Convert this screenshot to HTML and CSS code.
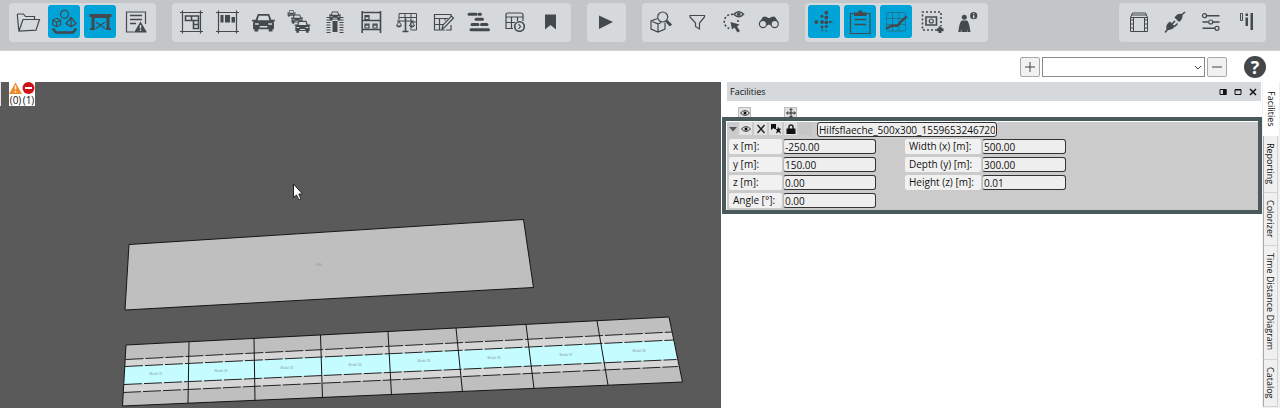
FILE: index.html
```html
<!DOCTYPE html>
<html lang="en">
<head>
<meta charset="utf-8">
<title>Facilities</title>
<link rel="stylesheet" href="styles.css">
</head>
<body>
<svg class="defs" aria-hidden="true">
  <symbol id="car" viewBox="0 0 24 20">
    <path d="M6 1h12l2.200 6H24v2h-1.500l.5 2v6h-1.500v2.500h-4V17h-11v2.500h-4V17H1v-6l.5-2H0V7h3.800z" fill="currentColor"/>
    <path d="M7.200 3h9.600l1.400 4.500H5.800z" fill="#d5d9dc"/>
    <path d="M3 11.500h4M17 11.500h4M8 14.500h8" stroke="#d5d9dc" stroke-width="1.600"/>
  </symbol>
  <symbol id="eye" viewBox="0 0 10 8">
    <path d="M.5 4Q5-.8 9.500 4 5 8.800.5 4z" fill="none" stroke="currentColor" stroke-width=".8"/>
    <circle cx="5" cy="4" r="1.500" fill="currentColor" stroke="none"/>
  </symbol>
</svg>
<header class="toolbar">
  <div class="group">
    <button class="tool" aria-label="Open"><svg viewBox="0 0 24 24"><path d="M2.800 20.500 1.300 4.800 2 4h5.500l2 2.500h9V9M3 21 7 9.500h16.500L20 20.200z"/></svg></button>
    <button class="tool on" aria-label="Objects"><svg viewBox="0 0 24 24"><circle cx="12.500" cy="4.300" r="4"/><path d="m4.700 8.300 4 2v4.400l-4 2-4-2v-4.400zM.7 10.300l4 2 4-2M4.700 12.300v4.400M19 7.500l5 6-5 3.200-5-3.200zM19 7.500v9"/><path class="heavy" d="M.8 18.500 4 22.500h17l3.200-4"/></svg></button>
    <button class="tool on" aria-label="Areas"><svg viewBox="0 0 24 24"><path class="fill" d="M1.500 4h22v3h-2v11H23v2h-5v-2h.5V8h-12v10H7v2H2v-2h1.500V7h-2z"/><path d="m8 12 9 6.500m0-6.500-9 6.500"/></svg></button>
    <button class="tool" aria-label="Log"><svg viewBox="0 0 24 24"><path d="M10 22H2.500V2h19v12"/><path class="mid" d="M6 5.500h12M6 9.500h12M6 13.500h6"/><path class="fill" d="m16.500 11.500 6.500 11H10z"/><path class="cut" d="M16.500 15v3.500m0 1v1.500"/></svg></button>
  </div>
  <div class="group">
    <button class="tool" aria-label="Layout"><svg viewBox="0 0 24 24"><path d="M3.500.5v23M21.500.5v23M1 2.500h23M1 21.500h23"/><path class="mid" d="M6.500 6h13v12.500h-5v-8h-8zM12.500 6v4.500h7M14.500 14.500h5"/></svg></button>
    <button class="tool" aria-label="Rows"><svg viewBox="0 0 24 24"><path d="M3.500.5v23M21.500.5v23M1 2.500h23M1 21.500h23"/><path class="fill" d="M5.500 5h3v7.500h-3zM10 5h5v7.500h-5zM16.500 7h3.500v5.500h-3.500z"/></svg></button>
    <button class="tool" aria-label="Vehicle"><svg viewBox="0 0 24 24"><use href="#car" x="1" y="3" width="23" height="19"/></svg></button>
    <button class="tool" aria-label="Vehicle queue"><svg viewBox="0 0 24 24"><use href="#car" x="0" y="0" width="9" height="7"/><use href="#car" x="4" y="4" width="12" height="10"/><use href="#car" x="7" y="10" width="17" height="13"/></svg></button>
    <button class="tool" aria-label="Route"><svg viewBox="0 0 24 24"><use href="#car" x="5" y="1" width="14" height="10"/><path class="fill" d="M9.500 11h5v11h-5z"/><path class="dash" d="M5.500 7v16M18.500 7v16"/></svg></button>
    <button class="tool" aria-label="Shelf"><svg viewBox="0 0 24 24"><path class="mid" d="M3.200 1v22M21.500 1v22M3 2.500h18M3 10.500h18M3 19.500h18"/><path d="M6 5.500h4v4H6zM6 14h4v4H6zM14 14h4v4h-4z"/><path class="mid" d="M6 6.500h4M6 15h4M14 15h4"/></svg></button>
    <button class="tool" aria-label="Compare"><svg viewBox="0 0 24 24"><path class="thin" d="M4 10V3.500h17.500V20H17M4 7.500h17.500M10 3.500v4M16 3.500v17M16 12h5.500M2 11h17M4 11l-2.500 5M4 11l2.500 5M17 11l-2.500 5M17 11l2.500 5"/><path class="mid" d="M10.500 8v13M7.500 21.500h6"/><path class="fill" d="M1 15.500h6q-3 4-6 0M14 15.500h6q-3 4-6 0"/></svg></button>
    <button class="tool" aria-label="Edit table"><svg viewBox="0 0 24 24"><path d="M14 20H3.500V4.500H20V7M3.500 8.500H17M3.500 14.500H12M8.500 8.500V20M14 8.500v2M20 15v5h-5M11 19l1-4 8.500-9 2 2-8.500 9z"/></svg></button>
    <button class="tool" aria-label="Schedule"><svg viewBox="0 0 24 24"><path class="bold round" d="M2 4.300h7M12 4.300h1.500M9 9.300h6.500M5 14.500h6M14.500 14.500h5.500M4 19.700h17.500"/></svg></button>
    <button class="tool" aria-label="Timetable"><svg viewBox="0 0 24 24"><path d="M10 18.500H3V5q0-2 2-2h13q2 0 2 2v6M3 7h17M3 12.500h9M8.500 7v11.500M14.500 7v4"/><circle class="mid" cx="16.500" cy="16.500" r="4.800"/><path d="m15.500 14 2 2.500-2 2.500"/></svg></button>
    <button class="tool" aria-label="Bookmark"><svg viewBox="0 0 24 24"><path class="fill" d="M6 4.500h11v15l-5.500-4.500L6 19.500z"/></svg></button>
  </div>
  <div class="group">
    <button class="tool" aria-label="Play"><svg viewBox="0 0 24 24"><path class="fill" d="m5 5.500 14 6.500-14 7z"/></svg></button>
  </div>
  <div class="group">
    <button class="tool" aria-label="Search object"><svg viewBox="0 0 24 24"><path d="M8.500 8.500 2 11v8l7 3 7-3v-6M2 11l7 3v8M9 14l3-1.500"/><circle cx="13.700" cy="7" r="5"/><path class="bold" d="m17.500 11 4.500 4.500"/></svg></button>
    <button class="tool" aria-label="Filter"><svg viewBox="0 0 24 24"><path d="M5 5.500h14.500v1.500L14.500 13v6l-4-2.500V13L5 7z"/></svg></button>
    <button class="tool" aria-label="Select visible"><svg viewBox="0 0 24 24"><path class="mid dots" d="M12 4.500a7.200 7.200 0 1 0-3 14.200M17 12V9"/><path class="mid" d="M13 4.300q4.700-5 9.500 0-4.800 5-9.500 0z"/><circle class="fill" cx="17.700" cy="4.300" r="1.800"/><path class="fill" d="m9.500 12 9 2.500-2.500 2 3 4.500-2.500 1.500-3-5-2.500 2z"/></svg></button>
    <button class="tool" aria-label="Find"><svg viewBox="0 0 24 24"><circle cx="6" cy="14" r="3.600"/><circle cx="17.700" cy="14" r="3.600"/><path class="fill" d="m2.500 12.500 3-5 1.500-1 3 .5 1 1h2l1-1 3-.5 1.500 1 3 5-3-2-3.500 1-1.500 4-1.700-1-1.700 1-1.500-4-3.500-1z"/></svg></button>
  </div>
  <div class="group">
    <button class="tool on" aria-label="Point cloud"><svg viewBox="0 0 24 24"><g class="fill"><circle cx="4.300" cy="12" r="1.900"/><circle cx="10" cy="6.200" r="1.500"/><circle cx="10" cy="12" r="1.900"/><circle cx="10" cy="17" r="1.500"/><circle cx="14.300" cy="2.700" r="1.900"/><circle cx="14.300" cy="7.500" r="1.900"/><circle cx="14.300" cy="12.300" r="1.900"/><circle cx="14.300" cy="16.500" r="1.500"/><circle cx="18.300" cy="12" r="1.300"/><circle cx="10.300" cy="20.300" r="1"/><circle cx="14.300" cy="20.700" r=".8"/><circle cx="21.300" cy="12" r=".6"/></g></svg></button>
    <button class="tool on" aria-label="Clipboard"><svg viewBox="0 0 24 24"><path d="M2.500 3.500H22v20H2.500z"/><path class="fill" d="M6 2.500h4q.5-2.500 2.200-2.500t2.300 2.500h4v3.500H6z"/><path class="mid" d="M6.500 9.500H18M6.500 14.500H18"/></svg></button>
    <button class="tool on" aria-label="Chart"><svg viewBox="0 0 24 24"><path class="faint" d="M2.500 4q0-1.500 1.500-1.500h16q1.500 0 1.500 1.500v15.500q0 1.500-1.500 1.500H4q-1.500 0-1.500-1.500zM8.500 2.500V21M15 2.500V21M2.500 8.500h19M2.500 14.500h19"/><path class="heavy" d="M2 18.700 7.700 15.700H13.300L17.300 11.300 22.700 6.300"/></svg></button>
    <button class="tool" aria-label="Add snapshot"><svg viewBox="0 0 24 24"><path class="mid dots" d="M17 20H2.500V2H21v14"/><path class="mid" d="M6 7h10.500v8H6z"/><circle cx="11.300" cy="11" r="2"/><path class="bold" d="M20 16.500v6.500M17 19.700h6.500"/></svg></button>
    <button class="tool" aria-label="Person info"><svg viewBox="0 0 24 24"><g class="fill"><circle cx="8.300" cy="7.200" r="2.500"/><path d="M6 10.500h5q2 1 3.500 11.500H12l-.5-3V22H5.500l-.3-3-.5 3H2.300Q3.500 11.500 6 10.500z"/><circle cx="17.700" cy="5.700" r="3.600"/></g><path class="cut" d="M17.700 3.300v1M17.700 5.300v3"/></svg></button>
  </div>
  <div class="group last">
    <button class="tool" aria-label="Module"><svg viewBox="0 0 24 24"><path class="thin" d="M4.500 7.500h17v14h-17zM4.500 7.500l2-4.500h13l2 4.500M5.500 5h15M7.500 7.500v14M18.500 7.500v14"/><path class="dots thin" d="M6 9v12M20 9v12"/></svg></button>
    <button class="tool" aria-label="Connect"><svg viewBox="0 0 24 24"><path class="fill" d="M12.500 7.500q3-5 7.500-3.500 2 4.500-3 8zM4.500 19.500q-1.500-4.500 3.500-8l5 5q-4 5-8.500 3z"/><path class="mid" d="m19.500 5 3.500-3M3 22.500l3-3.500M10 14l3-3M12.500 16.500l3-3"/></svg></button>
    <button class="tool" aria-label="Settings"><svg viewBox="0 0 24 24"><path class="mid" d="M9 5.700h12.500M4.500 12H10M15 12h6.500M4.500 18.300h12.500"/><circle cx="6.500" cy="5.700" r="2"/><circle cx="12.700" cy="12" r="2"/><circle cx="19" cy="18.300" r="2"/></svg></button>
    <button class="tool" aria-label="Levels"><svg viewBox="0 0 24 24"><path class="thin" d="M6.500 3.500h2v7h-2z"/><path class="fill" d="M11.500 3.500H14V6h-2.500zM11.500 7.500H14V16h-2.500zM16.500 3H19v17h-2.500z"/></svg></button>
  </div>
</header>
<div class="subbar">
  <button class="small" aria-label="Add"><svg viewBox="0 0 12 12"><path d="M6 1v10M1 6h10"/></svg></button>
  <div class="combo">
    <select aria-label="Selection"><option></option></select>
    <svg viewBox="0 0 8 6"><path d="m1 1 3 3 3-3"/></svg>
  </div>
  <button class="small" aria-label="Remove"><svg viewBox="0 0 12 12"><path d="M1 6h10"/></svg></button>
  <button class="help" aria-label="Help">?</button>
</div>
<main class="main">
  <section class="view" aria-label="3D view">
    <svg class="scene" viewBox="0 82 721 326" preserveAspectRatio="xMinYMin meet">
      <path fill="#e4e4e4" d="M0 82h1v24H0z"/>
      <path class="edge area" d="m129 244.500 394.500-25L533.500 287.500 125 310z"/>
      <text x="319" y="266">Hilfs</text>
      <path fill="#bfbfbf" d="m126 345 543-28 13.500 65L122.500 406z"/>
      <path fill="#d6d6d6" d="m125.500 359.500 547-27.500 5.500 34.500-555 26z"/>
      <path fill="#c4fcff" d="m125 366.500 549-26.500 2.500 19.500-552.500 25z"/>
      <path class="edge" d="m126 345 543-28 13.500 65L122.500 406z"/>
      <path class="broken" d="m125.500 359.500 547-27.500M125 366.500 674 340M124 384.500l552.500-25M123 392.500l555-26"/>
      <path class="edge" d="M189 342 188 403.500M254 338l1 63M320.500 335l2 63M388 332l3.500 63M456 328l6.500 64M526 324.500l8 64M597 321l11 64"/>
      <text x="156" y="375">Modul 01</text><text x="221" y="372">Modul 02</text><text x="287" y="369">Modul 03</text><text x="355" y="366">Modul 04</text><text x="424" y="362">Modul 05</text><text x="494" y="359">Modul 06</text><text x="566" y="356">Modul 07</text><text x="639" y="352">Modul 08</text>
      <path fill="#fff" stroke="#222" d="M293.500 184v13.500l3-2.500 2.500 5 2-1-2.200-5h3.700z"/>
    </svg>
    <div class="alerts">
      <span><svg viewBox="0 0 13 12"><path d="m6.500.5 6.500 11.500H0z" fill="#ee8a2c"/><path d="M6.500 3.500v4M6.500 9v1.500" stroke="#fff3dc" stroke-width="1.500"/></svg>(0)</span>
      <span><svg viewBox="0 0 13 12"><circle cx="6.500" cy="6" r="6" fill="#cf1218"/><path d="M3 6h7" stroke="#fff" stroke-width="2"/></svg>(1)</span>
    </div>
  </section>
  <section class="panel">
    <div class="titlebar">
      <h1>Facilities</h1>
      <button aria-label="Dock"><svg viewBox="0 0 8 8"><path d="M1 1.500h6v5H1z"/><path class="solid" d="M4 1h3.500v6H4z"/></svg></button>
      <button aria-label="Maximize"><svg viewBox="0 0 8 8"><path d="M1 1.500h6v5H1zM1 2h6"/></svg></button>
      <button aria-label="Close"><svg viewBox="0 0 8 8"><path d="m1 1 6 6M7 1 1 7" stroke-width="1.500"/></svg></button>
    </div>
    <div class="columns">
      <button class="mini" aria-label="Visibility"><svg viewBox="0 0 10 8"><use href="#eye" width="10" height="8"/></svg></button>
      <button class="mini" aria-label="Move"><svg viewBox="0 0 10 10"><path d="M5 1v8M1 5h8M3.500 2 5 .5 6.500 2M3.500 8 5 9.500 6.500 8M2 3.500.5 5 2 6.500M8 3.500 9.500 5 8 6.500"/></svg></button>
    </div>
    <article class="record">
      <div class="head">
        <button class="arrow" aria-label="Collapse"><svg viewBox="0 0 8 6"><path d="M0 1h8L4 5.500z" fill="#555"/></svg></button>
        <button class="mini" aria-label="Visible"><svg viewBox="0 0 10 8"><use href="#eye" width="10" height="8"/></svg></button>
        <button class="mini" aria-label="Delete"><svg viewBox="0 0 10 10"><path d="m1.500 1 7 8M8.500 1l-7 8" stroke-width="1.400"/></svg></button>
        <button class="mini" aria-label="Rename"><svg viewBox="0 0 10 10"><path class="solid" d="M0 0h5v5H3.500L2.500 4 0 6zM7 2.500l1 2 2.200.2-1.500 1.500 1.300 3.300L7.500 8 5 9.500l1-3L4.500 5h2z"/></svg></button>
        <button class="mini" aria-label="Lock"><svg viewBox="0 0 10 10"><path d="M3 5V3q0-2 2-2t2 2v2" stroke-width="1.500"/><path class="solid" d="M.5 4.500h9V10h-9z"/></svg></button>
        <button class="mini blank" aria-label="Color"></button>
        <input class="name" aria-label="Name" value="Hilfsflaeche_500x300_1559653246720">
      </div>
      <div class="fields">
        <div class="field"><label for="x">x [m]:</label><input id="x" value="-250.00"></div>
        <div class="field wide"><label for="w">Width (x) [m]:</label><input id="w" value="500.00"></div>
        <div class="field"><label for="y">y [m]:</label><input id="y" value="150.00"></div>
        <div class="field wide"><label for="d">Depth (y) [m]:</label><input id="d" value="300.00"></div>
        <div class="field"><label for="z">z [m]:</label><input id="z" value="0.00"></div>
        <div class="field wide"><label for="h">Height (z) [m]:</label><input id="h" value="0.01"></div>
        <div class="field"><label for="a">Angle [°]:</label><input id="a" value="0.00"></div>
      </div>
    </article>
  </section>
  <nav class="tabs">
    <button class="active">Facilities</button>
    <button>Reporting</button>
    <button>Colorizer</button>
    <button>Time Distance Diagram</button>
    <button>Catalog</button>
  </nav>
</main>
</body>
</html>
```
FILE: styles.css
```css
* { box-sizing: border-box; }
body {
  margin: 0;
  min-height: 100vh;
  display: flex;
  flex-direction: column;
  background: #fff;
  color: #111;
  font: 10px/12px "Open Sans", "Noto Sans", sans-serif;
}
button, input, select { margin: 0; padding: 0; font: inherit; color: inherit; }
button { border: 0; background: none; }
svg { display: block; }
.defs { position: absolute; width: 0; height: 0; }

.toolbar {
  display: flex;
  gap: 16px;
  padding: 3px 14px 8px 9px;
  background: #c3c6c8;
  border-bottom: 1px solid #cfd1d3;
}
.group {
  display: flex;
  gap: 4px;
  padding: 2px 4px 4px 3px;
  border-radius: 4px;
  background: #d5d9dc;
}
.last { margin-left: auto; }
.tool {
  display: grid;
  place-items: center;
  width: 32px;
  height: 33px;
  border-radius: 3px;
  color: #43494d;
}
.on { background: #00a3d8; }
.tool svg {
  width: 24px;
  height: 24px;
  overflow: visible;
  fill: none;
  stroke: currentColor;
  stroke-width: 1.2;
}
.tool use { stroke: none; }
.tool .fill { fill: currentColor; stroke: none; }
.tool .thin { stroke-width: 1; }
.tool .faint { stroke-width: 1; opacity: 0.5; }
.tool .mid { stroke-width: 1.6; }
.tool .heavy { stroke-width: 2.4; }
.tool .bold { stroke-width: 3; }
.tool .round { stroke-linecap: round; }
.tool .cut { stroke: #d5d9dc; stroke-width: 1.5; }
.tool .dots { stroke-dasharray: 2 2; }
.tool .dash { stroke-width: 4; stroke-dasharray: 1 1.5; }

.subbar {
  display: flex;
  align-items: center;
  justify-content: flex-end;
  gap: 2px;
  height: 31px;
  padding-right: 14px;
}
.small {
  display: grid;
  place-items: center;
  width: 20px;
  height: 20px;
  border: 1px solid #a8a8a8;
  border-radius: 2px;
  background: #f1f1f1;
}
.small svg { width: 12px; height: 12px; stroke: #444; }
.combo { position: relative; width: 163px; }
.combo select {
  display: block;
  appearance: none;
  width: 100%;
  height: 20px;
  border: 1px solid #8a8a8a;
  border-radius: 0;
  background: #fff;
}
.combo svg {
  position: absolute;
  right: 3px;
  top: 8px;
  width: 8px;
  height: 6px;
  fill: none;
  stroke: #444;
  pointer-events: none;
}
.help {
  width: 22px;
  height: 22px;
  margin-left: 15px;
  border-radius: 50%;
  background: #43474a;
  color: #fff;
  font: bold 18px/22px "Open Sans", sans-serif;
}

.main { flex: 1; display: flex; }
.view {
  position: relative;
  flex: 721 1 0;
  min-width: 0;
  background: #5a5a5a;
}
.scene { width: 100%; }
.scene text { font-size: 3px; text-anchor: middle; fill: #8a9294; }
.edge { fill: none; stroke: #151515; }
.scene .area { fill: #bfbfbf; }
.broken { fill: none; stroke: #222; stroke-dasharray: 18 2; }
.alerts {
  position: absolute;
  left: 9px;
  top: 0;
  display: flex;
  background: #fff;
}
.alerts span { width: 13px; text-align: center; }
.alerts svg { width: 13px; height: 12px; }

.panel { flex: 541 1 0; min-width: 0; background: #fff; }
.titlebar {
  display: flex;
  align-items: center;
  gap: 7px;
  height: 19px;
  margin: 0 1px 0 6px;
  padding: 0 4px 0 3px;
  background: #d5d9dc;
}
.titlebar h1 { flex: 1; margin: 0; font-size: 9px; font-weight: normal; }
.titlebar svg { width: 8px; height: 8px; fill: none; stroke: #111; }
.titlebar .solid, .mini .solid { fill: #111; stroke: none; }
.columns {
  display: flex;
  gap: 33px;
  height: 16px;
  padding: 6px 0 0 17px;
}
.mini {
  display: grid;
  place-items: center;
  width: 13px;
  height: 13px;
  background: #e1e1e1;
}
.mini svg { width: 10px; height: 10px; fill: none; stroke: #222; stroke-width: 1; }
.columns .mini { height: 10px; border: 1px solid #bbb; border-bottom: 0; }
.record {
  margin-left: 1px;
  padding: 1px 2px 2px;
  border: 4px solid #4a5a5c;
  background: #cbcbcb;
  box-shadow: inset 1px 1px #fff;
}
.head { display: flex; align-items: flex-start; gap: 2px; height: 17px; padding-left: 1px; }
.arrow { padding-top: 4px; }
.arrow svg { width: 8px; height: 6px; }
.blank { background: #c6c6c6; }
.name { width: 180px; margin-left: 3px; }
.record input {
  height: 15px;
  padding: 0 1px;
  border: 1px solid #333;
  border-radius: 3px;
  background: #eee;
  line-height: 13px;
}
.fields {
  display: grid;
  grid-template-columns: 147px 161px;
  gap: 3px 29px;
  padding-left: 1px;
}
.field { display: flex; gap: 1px; height: 15px; }
.field label {
  width: 53px;
  padding: 1px 0 0 4px;
  border-radius: 2px;
  background: #f1f1f1;
  white-space: nowrap;
}
.field input { flex: 1; min-width: 0; border-left-color: #bbb; }
.wide label { width: 76px; }

.tabs {
  display: flex;
  flex-direction: column;
  align-items: flex-start;
  width: 18px;
  padding-left: 1px;
  background: #f0f0f0;
}
.tabs button {
  writing-mode: vertical-rl;
  width: 15px;
  padding: 7px 1px 8px;
  border: 1px solid #d2d2d2;
  border-top: 0;
  border-left-color: #aaa;
  font-size: 9px;
  line-height: 11px;
}
.tabs .active {
  width: 16px;
  padding-top: 9px;
  border-color: #fff;
  background: #fff;
}
```
